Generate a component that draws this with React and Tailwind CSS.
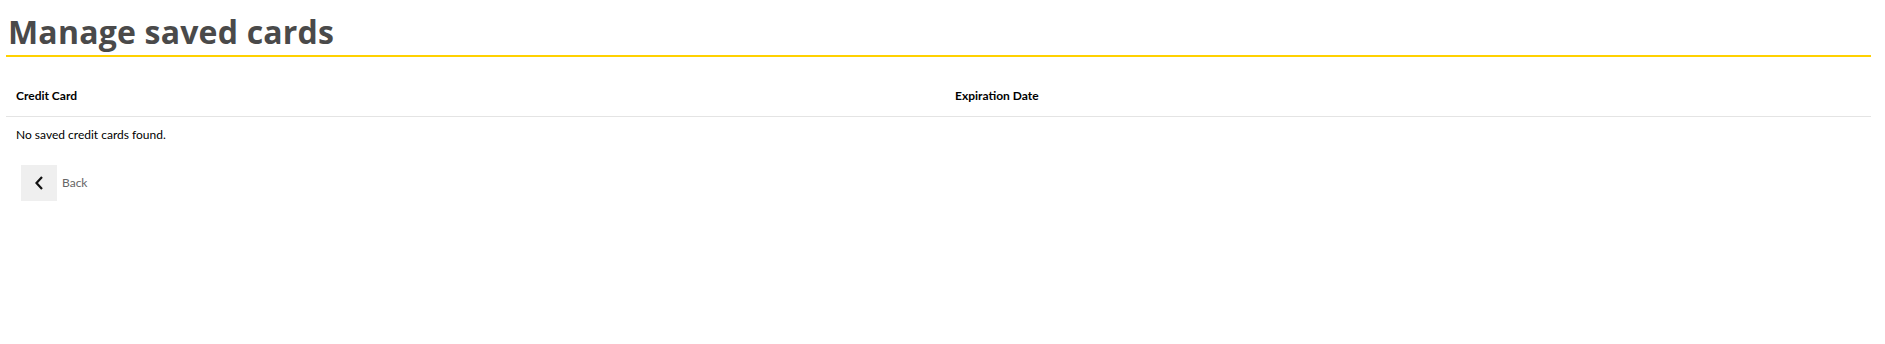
import React from 'react';

export default function App() {
  return (
    <div className="min-h-[344px] bg-white pl-[6px] pr-[14px] pt-[12px] font-['Lato','Liberation_Sans',sans-serif]">
      <h1 className="border-b-2 border-[#ffd100] pb-[4px] pl-[2px] font-['Open_Sans','Liberation_Sans',sans-serif] text-[32px] font-bold leading-[39px] tracking-[0.2px] text-[#4a4a4a]">
        Manage saved cards
      </h1>

      <table className="mt-[12px] w-full border-collapse text-[12px] text-black">
        <thead>
          <tr className="border-b border-[#e4e4e4]">
            <th className="h-[47px] w-[939px] px-[10px] pb-[11px] align-bottom text-left font-bold">Credit Card</th>
            <th className="h-[47px] px-[10px] pb-[11px] align-bottom text-left font-bold">Expiration Date</th>
          </tr>
        </thead>
        <tbody>
          <tr>
            <td colSpan={2} className="px-[10px] pt-[9px] pb-[11px]">No saved credit cards found.</td>
          </tr>
        </tbody>
      </table>

      <div className="mt-[10px] flex items-center pl-[15px]">
        <button className="flex h-[36px] w-[36px] items-center justify-center bg-[#efefef]">
          <svg width="10" height="14" viewBox="0 0 10 14" fill="none">
            <path d="M8 1L2.5 7L8 13" stroke="#111" strokeWidth="2.2" />
          </svg>
        </button>
        <span className="ml-[5px] text-[12px] text-[#666]">Back</span>
      </div>
    </div>
  );
}
